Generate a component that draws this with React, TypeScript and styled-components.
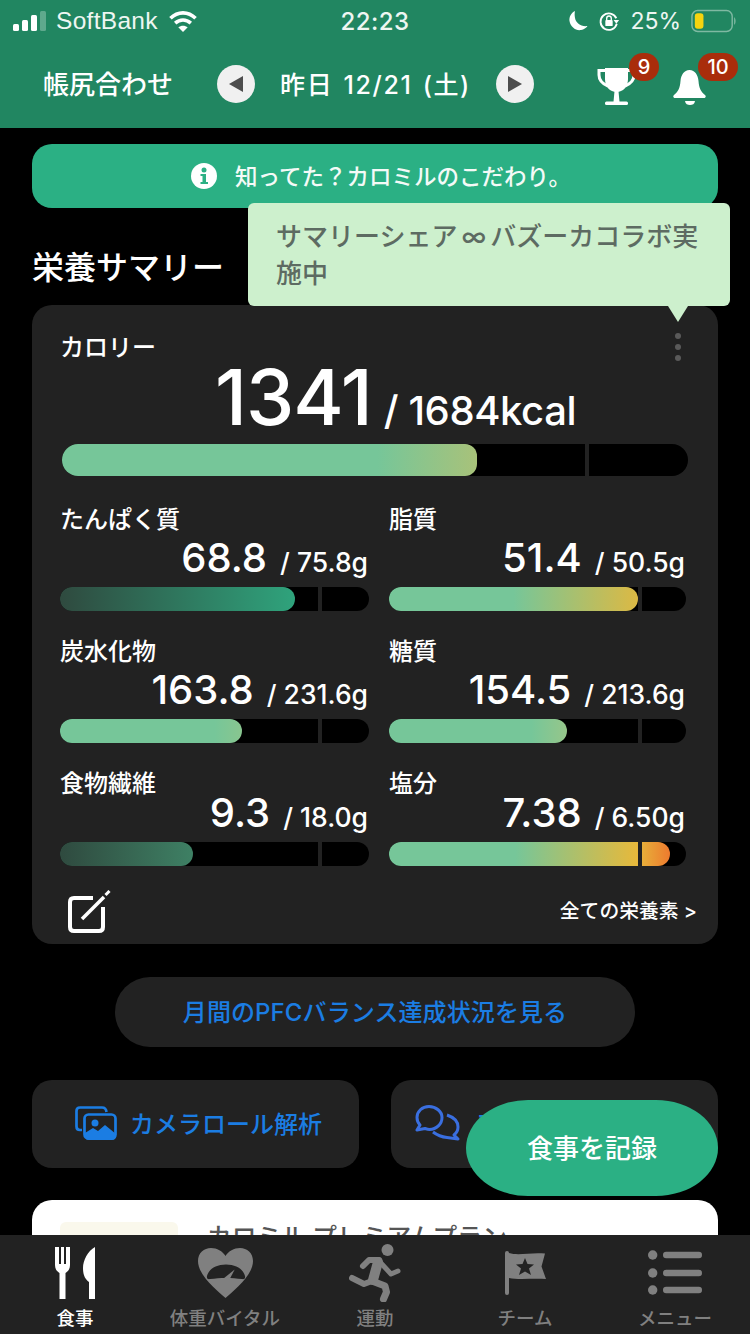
import React, { FC } from "react";
import styled, { createGlobalStyle } from "styled-components";

const GlobalStyle = createGlobalStyle`
  html, body {
    margin: 0;
    padding: 0;
    background: #000;
  }
  * {
    box-sizing: border-box;
  }
  body {
    font-family: Inter, "Noto Sans CJK JP", sans-serif;
    color: #fff;
  }
`;

const Screen = styled.div`
  position: relative;
  width: 750px;
  height: 1334px;
  display: flex;
  flex-direction: column;
  overflow: hidden;
  background: #000;
`;

const Header = styled.header`
  height: 128px;
  flex: none;
  background: #218661;
`;

const StatusBar = styled.div`
  height: 40px;
  padding: 2px 13px 0;
  display: flex;
  align-items: center;
  justify-content: space-between;
  font-size: 23px;
  color: #eef6f2;
`;

const StatusSide = styled.div`
  width: 300px;
  display: flex;
  align-items: center;
  gap: 10px;
  &:last-child {
    justify-content: flex-end;
  }
`;

const Clock = styled.div`
  font-size: 24px;
  font-weight: 500;
  letter-spacing: 0.5px;
`;

const Carrier = styled.span`
  font-family: "Liberation Sans", sans-serif;
  font-size: 24.5px;
  letter-spacing: 0.3px;
`;

const NavRow = styled.div`
  height: 88px;
  padding-left: 43px;
  display: flex;
  align-items: center;
`;

const NavTitle = styled.div`
  width: 174px;
  margin-bottom: 3px;
  font-size: 26px;
  font-weight: 500;
  white-space: nowrap;
`;

const DateNav = styled.div`
  width: 317px;
  display: flex;
  align-items: center;
  justify-content: space-between;
`;

const DateLabel = styled.div`
  margin-bottom: 2px;
  font-size: 25px;
  font-weight: 500;
  letter-spacing: 1.6px;
  word-spacing: 2px;
  white-space: nowrap;
`;

const RoundArrow = styled.div`
  width: 38px;
  height: 38px;
  border-radius: 50%;
  background: #f0f0f0;
  display: flex;
  align-items: center;
  justify-content: center;
`;

const NavIcons = styled.div`
  margin: 6px 0 0 63px;
  display: flex;
  align-items: center;
  gap: 36px;
`;

const IconWrap = styled.div`
  position: relative;
  display: flex;
`;

const Badge = styled.span<{ $wide?: boolean }>`
  position: absolute;
  top: -14px;
  left: ${({ $wide }) => ($wide ? "25px" : "32px")};
  width: ${({ $wide }) => ($wide ? "40px" : "30px")};
  height: 28px;
  border-radius: 14px;
  background: #a92d0b;
  font-size: 20px;
  font-weight: 500;
  line-height: 28px;
  text-align: center;
`;

const Content = styled.main`
  flex: 1;
  min-height: 0;
  overflow: hidden;
  padding: 16px 32px 0;
  display: flex;
  flex-direction: column;
`;

const Notice = styled.div`
  height: 64px;
  flex: none;
  padding-left: 12px;
  border-radius: 20px;
  background: #2bb084;
  display: flex;
  align-items: center;
  justify-content: center;
  gap: 18px;
  font-size: 22.5px;
  font-weight: 500;
  color: #f4faf7;
`;

const NoticeText = styled.span`
  margin-bottom: 3px;
`;

const SectionTitle = styled.h2`
  margin: 36px 0 14px 0;
  font-size: 32px;
  line-height: 47px;
  font-weight: 500;
`;

const Card = styled.section`
  position: relative;
  flex: none;
  height: 639px;
  border-radius: 20px;
  background: #222;
  padding: 26px 28px 0;
`;

const Label = styled.div`
  font-size: 24px;
  line-height: 34px;
  font-weight: 500;
  white-space: nowrap;
`;

const CalorieValue = styled.div`
  height: 72px;
  margin-top: -4px;
  padding-left: 155px;
  display: flex;
  align-items: baseline;
  gap: 12px;
  font-size: 40px;
  font-weight: 500;
  line-height: 72px;
  white-space: nowrap;
  letter-spacing: -0.4px;
`;

const BigNumber = styled.span`
  font-size: 77px;
  letter-spacing: -1px;
`;

const Track = styled.div<{ $height: number }>`
  position: relative;
  height: ${({ $height }) => $height}px;
  border-radius: ${({ $height }) => $height / 2}px;
  background: #000;
  overflow: hidden;
`;

const Fill = styled.div<{ $bg: string }>`
  height: 100%;
  border-radius: 0 12px 12px 0;
  background: ${({ $bg }) => $bg};
`;

const Tick = styled.div`
  position: absolute;
  top: 0;
  bottom: 0;
  width: 4px;
  background: #222;
`;

const CalorieTrack = styled.div`
  margin: 11px 2px 0;
`;

const NutrientGrid = styled.div`
  margin-top: 27px;
  display: grid;
  grid-template-columns: 309px 297px;
  column-gap: 20px;
  row-gap: 20px;
`;

const Nutrient = styled.div`
  height: 112px;
`;

const ValueLine = styled.div<{ $compact?: boolean }>`
  height: 42px;
  margin: ${({ $compact }) => ($compact ? "-9px" : "0")} 1px 8px 0;
  display: flex;
  justify-content: flex-end;
  align-items: baseline;
  gap: 13px;
  font-size: 26.5px;
  font-weight: 500;
  line-height: 42px;
  white-space: nowrap;
`;

const ValueNumber = styled.span`
  font-size: 40px;
`;

const CardFooter = styled.div`
  margin: 11px -7px 0 0;
  padding-left: 8px;
  display: flex;
  align-items: center;
  justify-content: space-between;
`;

const MoreLink = styled.div`
  font-size: 19.8px;
  font-weight: 500;
  margin-bottom: 6px;
`;

const Kebab = styled.div`
  position: absolute;
  top: 28px;
  right: 37px;
  display: flex;
  flex-direction: column;
  gap: 5px;
  & > i {
    width: 6px;
    height: 6px;
    border-radius: 50%;
    background: #5a5a5a;
  }
`;

const Tooltip = styled.div`
  position: absolute;
  top: 203px;
  left: 248px;
  width: 482px;
  height: 103px;
  padding: 15px 24px 0 28px;
  border-radius: 6px;
  background: #cdf0cd;
  color: #5d6b62;
  font-size: 26px;
  font-weight: 500;
  line-height: 37px;
  word-spacing: 0;
  &::after {
    content: "";
    position: absolute;
    top: 103px;
    left: 420px;
    border-left: 10px solid transparent;
    border-right: 10px solid transparent;
    border-top: 16px solid #cdf0cd;
  }
`;

const InfinityMark = styled.span`
  margin: 0 4px;
`;

const PfcButton = styled.div`
  flex: none;
  width: 520px;
  height: 70px;
  margin: 33px auto 0;
  padding-bottom: 3px;
  border-radius: 35px;
  background: #222;
  display: flex;
  align-items: center;
  justify-content: center;
  color: #1b7de3;
  font-size: 24px;
  font-weight: 500;
  letter-spacing: 0.1px;
`;

const ActionRow = styled.div`
  flex: none;
  margin-top: 33px;
  display: grid;
  grid-template-columns: 327px 327px;
  column-gap: 32px;
`;

const ActionCard = styled.div<{ $inset: number }>`
  height: 88px;
  border-radius: 20px;
  background: #222;
  padding: 0 0 3px ${({ $inset }) => $inset}px;
  display: flex;
  align-items: center;
  gap: 13px;
  color: #1b7de3;
  font-size: 24px;
  font-weight: 500;
  white-space: nowrap;
`;

const PromoCard = styled.div`
  flex: none;
  margin-top: 32px;
  height: 150px;
  border-radius: 20px;
  background: #fff;
  padding: 22px 28px;
  display: flex;
  gap: 29px;
`;

const PromoThumb = styled.div`
  width: 118px;
  height: 100px;
  border-radius: 6px;
  background: #faf8ec;
`;

const PromoTitle = styled.div`
  font-size: 24.7px;
  line-height: 30px;
  font-weight: 500;
  color: #555;
`;

const Fab = styled.div`
  position: absolute;
  top: 1100px;
  left: 466px;
  width: 252px;
  height: 96px;
  padding-bottom: 3px;
  border-radius: 62px / 48px;
  background: #2bb084;
  display: flex;
  align-items: center;
  justify-content: center;
  font-size: 26px;
  font-weight: 500;
`;

const TabBar = styled.nav`
  flex: none;
  height: 99px;
  background: #222;
  display: grid;
  grid-template-columns: repeat(5, 150px);
`;

const Tab = styled.div<{ $active?: boolean }>`
  padding-top: 8px;
  display: flex;
  flex-direction: column;
  align-items: center;
  color: ${({ $active }) => ($active ? "#fff" : "#808080")};
  font-size: 18.5px;
  font-weight: 500;
  line-height: 26px;
  white-space: nowrap;
`;

const TabIcon = styled.div`
  height: 60px;
  margin-bottom: 2px;
  display: flex;
  align-items: center;
`;

const SignalIcon = () => (
  <svg width="33" height="20" viewBox="0 0 33 20">
    <rect x="0" y="13" width="6" height="7" rx="1.5" fill="#fff" />
    <rect x="9" y="9" width="6" height="11" rx="1.5" fill="#fff" />
    <rect x="18" y="4" width="6" height="16" rx="1.5" fill="#fff" />
    <rect x="27" y="0" width="6" height="20" rx="1.5" fill="#5fa98d" />
  </svg>
);

const WifiIcon = () => (
  <svg width="30" height="23" viewBox="0 0 28 22" fill="none" stroke="#fff" strokeWidth="3.4">
    <path d="M2 8 C9 1 19 1 26 8" />
    <path d="M6.5 12.5 C11 8.5 17 8.5 21.5 12.5" />
    <path d="M14 21 L9.5 16.5 C12 14.5 16 14.5 18.5 16.5 Z" fill="#fff" stroke="none" />
  </svg>
);

const MoonIcon = () => (
  <svg width="20" height="22" viewBox="0 0 20 22">
    <path d="M7 1 C3 3 1 7 1.5 11 C2.5 17 8 21 13 20 C16 19.5 18 18 19.5 16 C13 17 8 13 7 8 C6.5 5 6.5 3 7 1 Z" fill="#fff" />
  </svg>
);

const RotationLockIcon = () => (
  <svg width="22" height="24" viewBox="0 0 24 24" fill="none" stroke="#fff" strokeWidth="2">
    <path d="M20 9 A9 9 0 1 0 20.5 15" />
    <path d="M23 11 L20 15 L17 11 Z" fill="#fff" stroke="none" />
    <rect x="8" y="11" width="8" height="6.5" rx="1" fill="#fff" stroke="none" />
    <path d="M9.5 11 V9 a2.5 2.5 0 0 1 5 0 V11" strokeWidth="1.5" />
  </svg>
);

const BatteryIcon = () => (
  <svg width="46" height="24" viewBox="0 0 48 24">
    <rect x="1" y="1" width="42" height="22" rx="6" fill="none" stroke="#7fb9a2" strokeWidth="1.5" />
    <rect x="4" y="4" width="9" height="16" rx="3" fill="#f6d40f" />
    <path d="M45 8 C47 9 47 15 45 16 Z" fill="#7fb9a2" />
  </svg>
);

const TriangleIcon: FC<{ right?: boolean }> = ({ right }) => (
  <svg width="16" height="18" viewBox="0 0 16 18">
    <path d={right ? "M1 1 L15 9 L1 17 Z" : "M15 1 L1 9 L15 17 Z"} fill="#4d4d4d" />
  </svg>
);

const TrophyIcon = () => (
  <svg width="40" height="40" viewBox="0 0 40 40" fill="#fff">
    <path d="M8 1 H31 V12 C31 20 26 25 19.5 25 C13 25 8 20 8 12 Z" />
    <path
      d="M8 3.5 H2 V8 C2 13 6 17 11 19 M31 3.5 H37 V8 C37 13 33 17 28 19"
      fill="none"
      stroke="#fff"
      strokeWidth="3"
    />
    <path d="M17.5 24 H21.5 L22.5 35 H16.5 Z" />
    <rect x="8" y="34.5" width="23" height="3.5" rx="1.5" />
  </svg>
);

const BellIcon = () => (
  <svg width="34" height="40" viewBox="0 0 34 40" fill="#fff">
    <path d="M16.5 3 C22 3 25 8 25.5 14 C26 21 28 25 32 28 C33.5 29.5 32.5 31 31 31 H2 C0.5 31 -0.5 29.5 1 28 C5 25 7 21 7.5 14 C8 8 11 3 16.5 3 Z" />
    <path d="M12 34 H22 C21.5 37 19.5 38 17 38 C14.5 38 12.5 37 12 34 Z" />
  </svg>
);

const InfoIcon = () => (
  <svg width="26" height="26" viewBox="0 0 26 26">
    <circle cx="13" cy="13" r="13" fill="#fff" />
    <circle cx="13" cy="7" r="2.5" fill="#2bb084" />
    <path d="M9.5 11 H15 V19 H17 V21 H9.5 V19 H11.5 V13 H9.5 Z" fill="#2bb084" />
  </svg>
);

const EditIcon = () => (
  <svg width="44" height="44" viewBox="0 0 44 44" fill="none" stroke="#fff">
    <path d="M25 8 H6 Q2 8 2 12 V37 Q2 41 6 41 H31 Q35 41 35 37 V17" strokeWidth="4" strokeLinejoin="round" />
    <path d="M14 29 L36 7" strokeWidth="3.5" />
    <path d="M37.5 5 L41.5 1" strokeWidth="3" />
  </svg>
);

const GalleryIcon = () => (
  <svg width="42" height="34" viewBox="0 0 42 34" fill="none" stroke="#1b7de3" strokeWidth="2.7">
    <path d="M7 24 H5 Q1.5 24 1.5 20.5 V5 Q1.5 1.5 5 1.5 H27 Q31 1.5 31.5 6" />
    <rect x="9.5" y="8.5" width="31" height="24" rx="4" />
    <circle cx="20" cy="17" r="3.5" fill="#1b7de3" stroke="none" />
    <path d="M10 27 L18 22 L23 25 L30 19 L41 28 V30 Q41 34 37 34 H14 Q10 34 10 30 Z" fill="#1b7de3" stroke="none" />
  </svg>
);

const ChatIcon = () => (
  <svg width="46" height="36" viewBox="0 0 46 36" fill="none" stroke="#3a6fe0" strokeWidth="3" strokeLinejoin="round">
    <path d="M14 1.5 C7 1.5 2 6.5 2 12.5 C2 15.5 3 18 5 20 L2 25 L10 23.5 C11.5 24 13 24.5 14.5 24.5 C21.5 24.5 27 19 27 12.5 C27 6.5 21 1.5 14 1.5 Z" />
    <path d="M32 10 C38 12 43 16 43 22 C43 25 41.5 28 39 30 L43 34 L32 32.5 C27 32 22 30 18 27" />
  </svg>
);

const ForkKnifeIcon = () => (
  <svg width="42" height="52" viewBox="0 0 42 52" fill="#fff">
    <path d="M1 0 H5 V17 H7 V0 H10 V17 H12 V0 H16 V18 C16 23 13 25 11.5 26 V52 H5.5 V26 C4 25 1 23 1 18 Z" />
    <path d="M41 0 C34 4 29 13 29 21 C29 28 31 32 35 35 V52 H41 Z" />
  </svg>
);

const HeartIcon = () => (
  <svg width="55" height="50" viewBox="0 0 55 50">
    <path
      d="M27.5 50 C20 43 0 28 0 13 C0 5 6 0 13 0 C19 0 24.5 3 27.5 8 C30.5 3 36 0 42 0 C49 0 55 5 55 13 C55 28 35 43 27.5 50 Z"
      fill="#808080"
    />
    <path d="M9 28 C11 21 18 16.5 28 16.5 C38 16.5 45 21 47 28 C47.5 30.5 46 31.5 44 31 C34 29.5 22 29.5 12 31 C10 31.5 8.5 30.5 9 28 Z" fill="#222" />
    <path d="M25.5 30.5 L36.7 21.5 L32 30.5 Z" fill="#808080" />
  </svg>
);

const RunnerIcon = () => (
  <svg width="52" height="58" viewBox="0 0 52 58" fill="none" stroke="#808080" strokeWidth="6" strokeLinecap="round" strokeLinejoin="round">
    <circle cx="38.5" cy="6" r="6" fill="#808080" stroke="none" />
    <path d="M14 22 L20 16 L30 16" />
    <path d="M30 17 L42 30 L49 27" strokeWidth="5" />
    <path d="M29 18 L24 36" strokeWidth="10" />
    <path d="M23 37 L36 42 L37.5 48 L34.5 55" strokeWidth="7" />
    <path d="M23 37 L15 40 L3 34" strokeWidth="6" />
  </svg>
);

const FlagIcon = () => (
  <svg width="41" height="44" viewBox="0 0 41 44">
    <rect x="0" y="0" width="4" height="44" rx="2" fill="#808080" />
    <path d="M4 2 C14 5 26 1 40 2.5 L36.5 15.5 L41 28 C28 27 14 29 4 27 Z" fill="#808080" />
    <path d="M20 7 L22.5 13 L29 13.5 L24 17.5 L26 24 L20 20.5 L14 24 L16 17.5 L11 13.5 L17.5 13 Z" fill="#222" />
  </svg>
);

const MenuIcon = () => (
  <svg width="54" height="46" viewBox="0 0 54 46" fill="#808080">
    <circle cx="4.7" cy="5" r="4.7" />
    <circle cx="4.7" cy="23" r="4.7" />
    <circle cx="4.7" cy="40" r="4.7" />
    <rect x="15" y="1.7" width="39" height="6.5" rx="3.2" />
    <rect x="15" y="19.7" width="39" height="6.5" rx="3.2" />
    <rect x="15" y="36.7" width="39" height="6.5" rx="3.2" />
  </svg>
);

const green = "#76c699";
const lowGradient = "linear-gradient(90deg, #2f4a3f 0%, #2fa37c 100%)";

const nutrients = [
  {
    name: "たんぱく質",
    value: "68.8",
    target: "75.8g",
    fill: 76,
    tick: 83.5,
    bg: lowGradient,
  },
  {
    name: "脂質",
    value: "51.4",
    target: "50.5g",
    fill: 84,
    tick: 84,
    bg: `linear-gradient(90deg, ${green} 0%, ${green} 50%, #dcb944 100%)`,
  },
  {
    name: "炭水化物",
    value: "163.8",
    target: "231.6g",
    fill: 59,
    tick: 83.5,
    bg: `linear-gradient(90deg, ${green} 0%, ${green} 85%, #89c68f 100%)`,
  },
  {
    name: "糖質",
    value: "154.5",
    target: "213.6g",
    fill: 60,
    tick: 84,
    bg: `linear-gradient(90deg, ${green} 0%, ${green} 80%, #96c68a 100%)`,
  },
  {
    name: "食物繊維",
    value: "9.3",
    target: "18.0g",
    fill: 43,
    tick: 83.5,
    compact: true,
    bg: "linear-gradient(90deg, #2f4a3f 0%, #3e8064 100%)",
  },
  {
    name: "塩分",
    value: "7.38",
    target: "6.50g",
    fill: 94.5,
    tick: 84,
    compact: true,
    bg: `linear-gradient(90deg, ${green} 0%, ${green} 45%, #e6b93c 88%, #ee7a2e 100%)`,
  },
];

const tabs = [
  { label: "食事", icon: <ForkKnifeIcon />, active: true },
  { label: "体重バイタル", icon: <HeartIcon /> },
  { label: "運動", icon: <RunnerIcon /> },
  { label: "チーム", icon: <FlagIcon /> },
  { label: "メニュー", icon: <MenuIcon /> },
];

const App: FC = () => (
  <Screen>
    <GlobalStyle />
    <Header>
      <StatusBar>
        <StatusSide>
          <SignalIcon />
          <Carrier>SoftBank</Carrier>
          <WifiIcon />
        </StatusSide>
        <Clock>22:23</Clock>
        <StatusSide>
          <MoonIcon />
          <RotationLockIcon />
          <span>25%</span>
          <BatteryIcon />
        </StatusSide>
      </StatusBar>
      <NavRow>
        <NavTitle>帳尻合わせ</NavTitle>
        <DateNav>
          <RoundArrow>
            <TriangleIcon />
          </RoundArrow>
          <DateLabel>昨日 12/21 (土)</DateLabel>
          <RoundArrow>
            <TriangleIcon right />
          </RoundArrow>
        </DateNav>
        <NavIcons>
          <IconWrap>
            <TrophyIcon />
            <Badge>9</Badge>
          </IconWrap>
          <IconWrap>
            <BellIcon />
            <Badge $wide>10</Badge>
          </IconWrap>
        </NavIcons>
      </NavRow>
    </Header>

    <Content>
      <Notice>
        <InfoIcon />
        <NoticeText>知ってた？カロミルのこだわり。</NoticeText>
      </Notice>
      <SectionTitle>栄養サマリー</SectionTitle>
      <Card>
        <Kebab>
          <i />
          <i />
          <i />
        </Kebab>
        <Label>カロリー</Label>
        <CalorieValue>
          <BigNumber>1341</BigNumber>/ 1684kcal
        </CalorieValue>
        <CalorieTrack>
          <Track $height={32}>
            <Fill
              $bg={`linear-gradient(90deg, ${green} 0%, ${green} 76%, #a8c27a 100%)`}
              style={{ width: "66.3%" }}
            />
            <Tick style={{ left: "83.5%" }} />
          </Track>
        </CalorieTrack>
        <NutrientGrid>
          {nutrients.map((n) => (
            <Nutrient key={n.name}>
              <Label>{n.name}</Label>
              <ValueLine $compact={n.compact}>
                <ValueNumber>{n.value}</ValueNumber>/ {n.target}
              </ValueLine>
              <Track $height={24}>
                <Fill $bg={n.bg} style={{ width: `${n.fill}%` }} />
                <Tick style={{ left: `${n.tick}%` }} />
              </Track>
            </Nutrient>
          ))}
        </NutrientGrid>
        <CardFooter>
          <EditIcon />
          <MoreLink>全ての栄養素 &gt;</MoreLink>
        </CardFooter>
      </Card>
      <PfcButton>月間のPFCバランス達成状況を見る</PfcButton>
      <ActionRow>
        <ActionCard $inset={43}>
          <GalleryIcon />
          カメラロール解析
        </ActionCard>
        <ActionCard $inset={24}>
          <ChatIcon />
          みんなの投稿
        </ActionCard>
      </ActionRow>
      <PromoCard>
        <PromoThumb />
        <PromoTitle>カロミル プレミアムプラン</PromoTitle>
      </PromoCard>
    </Content>

    <TabBar>
      {tabs.map((t) => (
        <Tab key={t.label} $active={t.active}>
          <TabIcon>{t.icon}</TabIcon>
          {t.label}
        </Tab>
      ))}
    </TabBar>

    <Tooltip>
      サマリーシェア<InfinityMark>∞</InfinityMark>バズーカコラボ実施中
    </Tooltip>
    <Fab>食事を記録</Fab>
  </Screen>
);

export default App;
